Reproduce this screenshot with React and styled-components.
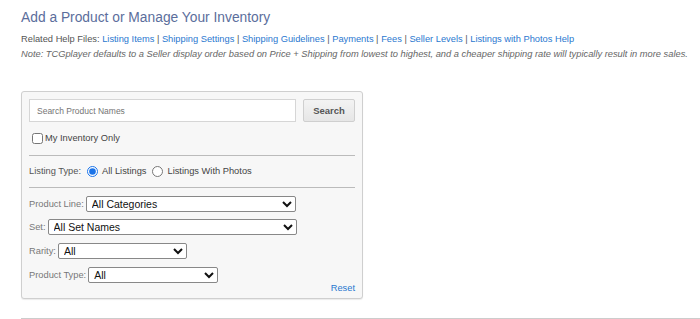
import styled, { createGlobalStyle } from "styled-components";

const Global = createGlobalStyle`
body{
    margin: 0;
    background: #fff;
    font-family: "Liberation Sans", Arial, sans-serif;
}
`

const Page = styled.div`
padding: 9px 0 0 21px;
`

const Title = styled.h2`
margin: 0;
font-size: 13.8px;
line-height: 18px;
font-weight: normal;
color: #5b6e9c;
`

const HelpLine = styled.div`
margin-top: 5px;
font-size: 9.3px;
line-height: 15px;
color: #555;
white-space: nowrap;
a{
    color: #2a78cf;
    text-decoration: none;
}
`

const Note = styled.div`
font-size: 9.3px;
line-height: 15px;
font-style: italic;
color: #666;
white-space: nowrap;
`

const Panel = styled.div`
margin-top: 29px;
width: 326px;
padding: 7px 7px 5px;
border: 1px solid #cfcfcf;
border-radius: 3px;
background-color: #f7f7f7;
background-image: radial-gradient(#ececec 0.6px, transparent 0.7px);
background-size: 4px 4px;
box-shadow: 0 1px 1px rgba(0,0,0,0.08);
`

const SearchRow = styled.div`
display: flex;
gap: 7px;
`

const SearchInput = styled.input`
flex: 1;
height: 23px;
box-sizing: border-box;
border: 1px solid #d6d6d6;
background: #fff;
padding: 0 7px;
font-family: inherit;
font-size: 8.5px;
outline: none;
::placeholder{
    color: #666;
}
`

const SearchButton = styled.button`
width: 52px;
height: 23px;
border: 1px solid #cfcfcf;
border-radius: 2px;
background: linear-gradient(#f3f3f3, #e6e6e6);
color: #555;
font-family: inherit;
font-size: 9.5px;
font-weight: bold;
padding: 0;
`

const CheckRow = styled.label`
display: flex;
align-items: center;
gap: 1px;
margin-top: 9px;
padding-left: 3px;
height: 14px;
font-size: 9.3px;
color: #444;
input{
    margin: 0 1px 0 0;
    width: 11px;
    height: 11px;
}
`

const Divider = styled.hr`
border: 0;
border-top: 1px solid #bbb;
margin: ${p => p.$top}px 0 0;
`

const RadioRow = styled.div`
display: flex;
align-items: center;
height: 16px;
margin-top: 7px;
font-size: 9.3px;
color: #555;
`

const RadioLabel = styled.label`
display: flex;
align-items: center;
gap: 4px;
margin-left: ${p => p.$gap}px;
color: #444;
input{
    margin: 0;
    width: 11px;
    height: 11px;
    accent-color: #1a73e8;
}
`

const FieldRow = styled.div`
display: flex;
align-items: center;
gap: 2px;
height: 16px;
margin-top: ${p => p.$top}px;
font-size: 9.3px;
color: #777;
`

const Select = styled.select`
width: ${p => p.$w}px;
height: 16px;
padding: 0 0 0 1px;
font-family: inherit;
font-size: 10.5px;
color: #111;
border: 1px solid #888;
border-radius: 2px;
background: #fff;
`

const Footer = styled.div`
text-align: right;
font-size: 9.3px;
line-height: 10px;
a{
    color: #2a78cf;
    text-decoration: none;
}
`

const BottomRule = styled.div`
margin-top: 19px;
border-top: 1px solid #ccc;
`

const links = [
    "Listing Items",
    "Shipping Settings",
    "Shipping Guidelines",
    "Payments",
    "Fees",
    "Seller Levels",
    "Listings with Photos Help",
]

const fields = [
    { label: "Product Line:", value: "All Categories", w: 210, top: 8 },
    { label: "Set:", value: "All Set Names", w: 249, top: 7 },
    { label: "Rarity:", value: "All", w: 129, top: 8 },
    { label: "Product Type:", value: "All", w: 130, top: 8 },
]

const App = () =>
{
    return <Page>
        <Global />
        <Title>Add a Product or Manage Your Inventory</Title>
        <HelpLine>
            Related Help Files:{" "}
            {links.map((l, i) => <span key={l}>
                <a href="#">{l}</a>{i < links.length - 1 ? " | " : ""}
            </span>)}
        </HelpLine>
        <Note>Note: TCGplayer defaults to a Seller display order based on Price + Shipping from lowest to highest, and a cheaper shipping rate will typically result in more sales.</Note>

        <Panel>
            <SearchRow>
                <SearchInput placeholder="Search Product Names" />
                <SearchButton>Search</SearchButton>
            </SearchRow>
            <CheckRow><input type="checkbox" /> My Inventory Only</CheckRow>
            <Divider $top={10} />
            <RadioRow>
                Listing Type:
                <RadioLabel $gap={6}><input type="radio" name="lt" defaultChecked /> All Listings</RadioLabel>
                <RadioLabel $gap={6}><input type="radio" name="lt" /> Listings With Photos</RadioLabel>
            </RadioRow>
            <Divider $top={8} />
            {fields.map(f => <FieldRow key={f.label} $top={f.top}>
                {f.label}
                <Select $w={f.w} defaultValue={f.value}>
                    <option>{f.value}</option>
                </Select>
            </FieldRow>)}
            <Footer><a href="#">Reset</a></Footer>
        </Panel>
        <BottomRule />
    </Page>
}

export default App;
